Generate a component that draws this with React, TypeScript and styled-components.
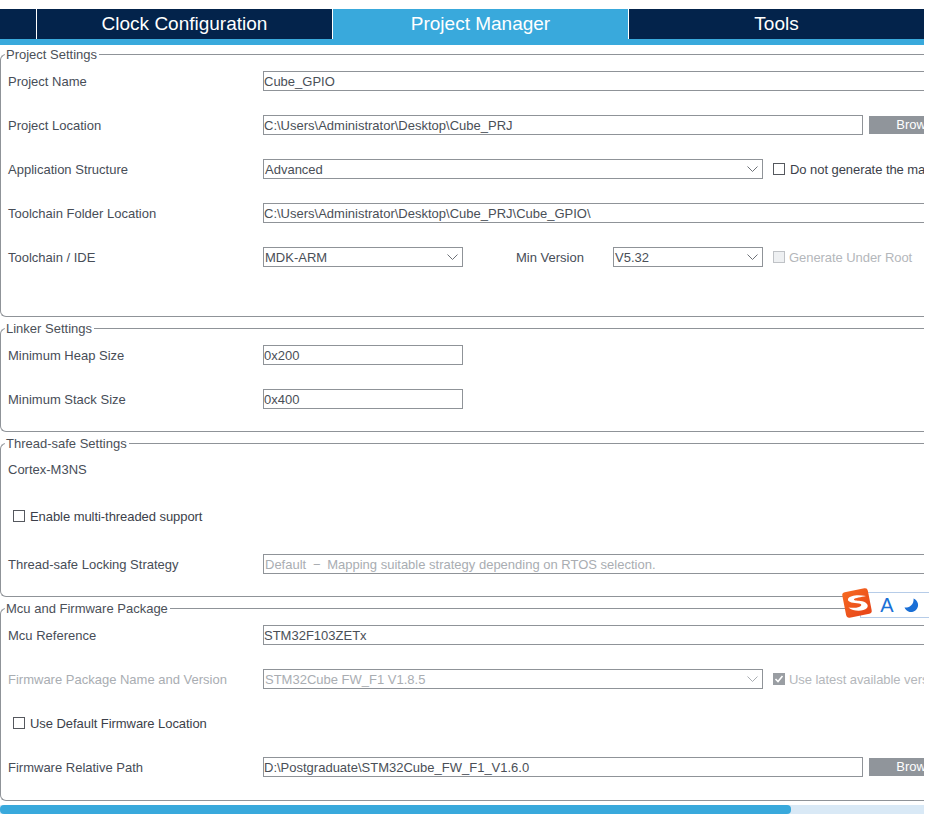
import React from 'react';
import styled, { createGlobalStyle } from 'styled-components';

const GlobalStyle = createGlobalStyle`
  html, body {
    margin: 0;
    padding: 0;
    background: #fff;
    overflow: hidden;
  }
  body {
    font-family: "Liberation Sans", Arial, sans-serif;
  }
`;

const Page = styled.div`
  position: relative;
  width: 929px;
  height: 814px;
  overflow: hidden;
`;

const Content = styled.div`
  width: 924px;
  height: 814px;
  padding-top: 9px;
  box-sizing: border-box;
  overflow: hidden;
  display: flex;
  flex-direction: column;
`;

const TabBar = styled.div`
  display: flex;
  height: 30px;
  margin-bottom: 4px;
  border-bottom: 6px solid #39a9dc;
  flex: none;
`;

const Tab = styled.div<{ $active?: boolean; $width: number }>`
  width: ${(p) => p.$width}px;
  flex: none;
  box-sizing: border-box;
  background: ${(p) => (p.$active ? '#39a9dc' : '#03234b')};
  color: #fff;
  font-size: 19px;
  line-height: 30px;
  text-align: center;
  & + & {
    border-left: 1px solid #fff;
  }
`;

const Group = styled.fieldset<{ $height: number }>`
  margin: 0;
  padding: 0;
  width: 1100px;
  height: ${(p) => p.$height}px;
  box-sizing: border-box;
  flex: none;
  border: 1px solid #8f9398;
  border-right: none;
  border-radius: 6px 0 0 6px;
  & + & {
    margin-top: 6px;
  }
`;

const Legend = styled.legend`
  margin: 0 0 -1px 4px;
  padding: 0 2px 0 1px;
  font-size: 13px;
  line-height: 11px;
  color: #4b5058;
`;

const Row = styled.div<{ $height?: number; $indent?: number }>`
  display: flex;
  align-items: center;
  height: ${(p) => p.$height ?? 44}px;
  padding-left: ${(p) => p.$indent ?? 7}px;
`;

const Label = styled.div<{ $disabled?: boolean }>`
  width: 255px;
  flex: none;
  font-size: 13px;
  white-space: nowrap;
  color: ${(p) => (p.$disabled ? '#a9adb2' : '#474d57')};
`;

const Field = styled.div<{ $width: number; $disabled?: boolean }>`
  width: ${(p) => p.$width}px;
  height: 20px;
  flex: none;
  box-sizing: border-box;
  border: 1px solid #8f9398;
  padding: 0 0 0 ${(p) => (p.$disabled ? 1 : 0)}px;
  font-size: 13px;
  line-height: 19px;
  white-space: nowrap;
  overflow: hidden;
  color: ${(p) => (p.$disabled ? '#a9adb2' : '#4a4f57')};
`;

const Dash = styled.span`
  margin: 0 6.7px;
`;

const SelectBox = styled(Field)`
  display: flex;
  align-items: center;
  justify-content: space-between;
  padding-left: 1px;
  padding-right: 4px;
  svg {
    flex: none;
  }
`;

const ChevronLine = styled.path<{ $disabled?: boolean }>`
  fill: none;
  stroke: ${(p) => (p.$disabled ? '#a9adb2' : '#6d7177')};
  stroke-width: 1;
`;

const BrowseButton = styled.div`
  width: 98px;
  height: 18px;
  margin-left: 6px;
  flex: none;
  background: #90959b;
  color: #fff;
  font-size: 13px;
  line-height: 18px;
  text-align: center;
`;

const CheckWrap = styled.div<{ $disabled?: boolean; $gap?: number }>`
  display: flex;
  align-items: center;
  flex: none;
  margin-left: ${(p) => p.$gap ?? 0}px;
  font-size: 13px;
  letter-spacing: -0.06px;
  white-space: nowrap;
  color: ${(p) => (p.$disabled ? '#b4b7bb' : '#3c3f4a')};
`;

const CheckBox = styled.span<{ $disabled?: boolean; $checked?: boolean }>`
  width: 12px;
  height: 12px;
  margin-right: ${(p) => (p.$disabled ? 4 : 5)}px;
  flex: none;
  box-sizing: border-box;
  display: flex;
  align-items: center;
  justify-content: center;
  border: 1px solid ${(p) => (p.$disabled ? (p.$checked ? '#9a9ea3' : '#bfc2c6') : '#55585e')};
  background: ${(p) => (p.$disabled ? (p.$checked ? '#9a9ea3' : '#eef0f2') : '#fff')};
`;

const MinVersionLabel = styled.div`
  width: 97px;
  margin-left: 53px;
  flex: none;
  font-size: 13px;
  color: #474d57;
`;

const Progress = styled.div`
  height: 9px;
  margin-top: 4px;
  flex: none;
  background: #d9e9f6;
`;

const ProgressFill = styled.div`
  width: 791px;
  height: 100%;
  background: #39a9dc;
  border-radius: 4px;
`;

const ImeBar = styled.div`
  position: absolute;
  left: 860px;
  top: 592px;
  width: 69px;
  height: 26px;
  box-sizing: border-box;
  background: #fff;
  border: 1px solid #b6cce8;
  border-right: none;
  display: flex;
  align-items: center;
`;

const ImeLetter = styled.span`
  margin-left: 18px;
  width: 16px;
  color: #1a6fd6;
  font-size: 20px;
  line-height: 24px;
  text-align: center;
`;

const ImeLogo = styled.svg`
  position: absolute;
  left: 840px;
  top: 586px;
`;

const ImeMoon = styled.svg`
  margin-left: 9px;
`;

const Select = ({ width, value, disabled }: { width: number; value: string; disabled?: boolean }) => (
  <SelectBox $width={width} $disabled={disabled}>
    {value}
    <svg width="11" height="6" viewBox="0 0 11 6">
      <ChevronLine d="M0.5 0.5 L5.5 5.5 L10.5 0.5" $disabled={disabled} />
    </svg>
  </SelectBox>
);

const Check = ({
  label,
  disabled,
  checked,
  gap,
}: {
  label: string;
  disabled?: boolean;
  checked?: boolean;
  gap?: number;
}) => (
  <CheckWrap $disabled={disabled} $gap={gap}>
    <CheckBox $disabled={disabled} $checked={checked}>
      {checked && (
        <svg width="10" height="10" viewBox="0 0 10 10" fill="none">
          <path d="M1.5 5 L4 7.5 L8.5 2" stroke="#fff" strokeWidth="1.6" />
        </svg>
      )}
    </CheckBox>
    {label}
  </CheckWrap>
);

export default function App() {
  return (
    <Page>
      <GlobalStyle />
      <Content>
        <TabBar>
          <Tab $width={36} />
          <Tab $width={296}>Clock Configuration</Tab>
          <Tab $width={296} $active>
            Project Manager
          </Tab>
          <Tab $width={296}>Tools</Tab>
        </TabBar>

        <Group $height={268}>
          <Legend>Project Settings</Legend>
          <Row>
            <Label>Project Name</Label>
            <Field $width={800}>Cube_GPIO</Field>
          </Row>
          <Row>
            <Label>Project Location</Label>
            <Field $width={600}>C:\Users\Administrator\Desktop\Cube_PRJ</Field>
            <BrowseButton>Browse</BrowseButton>
          </Row>
          <Row>
            <Label>Application Structure</Label>
            <Select width={500} value="Advanced" />
            <Check label="Do not generate the main()" gap={10} />
          </Row>
          <Row>
            <Label>Toolchain Folder Location</Label>
            <Field $width={800}>C:\Users\Administrator\Desktop\Cube_PRJ\Cube_GPIO\</Field>
          </Row>
          <Row>
            <Label>Toolchain / IDE</Label>
            <Select width={200} value="MDK-ARM" />
            <MinVersionLabel>Min Version</MinVersionLabel>
            <Select width={150} value="V5.32" />
            <Check label="Generate Under Root" disabled gap={10} />
          </Row>
        </Group>

        <Group $height={109}>
          <Legend>Linker Settings</Legend>
          <Row>
            <Label>Minimum Heap Size</Label>
            <Field $width={200}>0x200</Field>
          </Row>
          <Row>
            <Label>Minimum Stack Size</Label>
            <Field $width={200}>0x400</Field>
          </Row>
        </Group>

        <Group $height={159}>
          <Legend>Thread-safe Settings</Legend>
          <Row $height={42}>
            <Label>Cortex-M3NS</Label>
          </Row>
          <Row $height={52} $indent={12}>
            <Check label="Enable multi-threaded support" />
          </Row>
          <Row>
            <Label>Thread-safe Locking Strategy</Label>
            <Field $width={800} $disabled>
              Default<Dash>−</Dash>Mapping suitable strategy depending on RTOS selection.
            </Field>
          </Row>
        </Group>

        <Group $height={198}>
          <Legend>Mcu and Firmware Package</Legend>
          <Row>
            <Label>Mcu Reference</Label>
            <Field $width={800}>STM32F103ZETx</Field>
          </Row>
          <Row>
            <Label $disabled>Firmware Package Name and Version</Label>
            <Select width={500} value="STM32Cube FW_F1 V1.8.5" disabled />
            <Check label="Use latest available version" disabled checked gap={10} />
          </Row>
          <Row $indent={12}>
            <Check label="Use Default Firmware Location" />
          </Row>
          <Row>
            <Label>Firmware Relative Path</Label>
            <Field $width={600}>D:\Postgraduate\STM32Cube_FW_F1_V1.6.0</Field>
            <BrowseButton>Browse</BrowseButton>
          </Row>
        </Group>

        <Progress>
          <ProgressFill />
        </Progress>
      </Content>

      <ImeBar>
        <ImeLetter>A</ImeLetter>
        <ImeMoon width="15" height="15" viewBox="0 0 15 15">
          <path d="M9.5 0.5 A7 7 0 1 1 0.5 9.5 A8 8 0 0 0 9.5 0.5 Z" fill="#1a6fd6" />
        </ImeMoon>
      </ImeBar>
      <ImeLogo width="34" height="34" viewBox="0 0 34 34">
        <defs>
          <linearGradient id="imeOrange" x1="0" y1="0" x2="0.6" y2="1">
            <stop offset="0" stopColor="#f66a21" />
            <stop offset="1" stopColor="#e9491a" />
          </linearGradient>
        </defs>
        <rect x="4" y="4" width="26" height="26" rx="3" fill="url(#imeOrange)" transform="rotate(-11 17 17)" />
        <path d="M26 10 C19 8.5 9.5 9 8 13 C7 16.5 14 17 19 17.5 C22 18 22 20 19 21 C16 22 12 22 8.5 21.5 C13 25.5 23 26 27 22 C29.5 18.5 25.5 15.5 20.5 15 C16.5 14.5 13.5 14.5 14 13 C15 12 21 11 26 10 Z" fill="#fff" />
      </ImeLogo>
    </Page>
  );
}
